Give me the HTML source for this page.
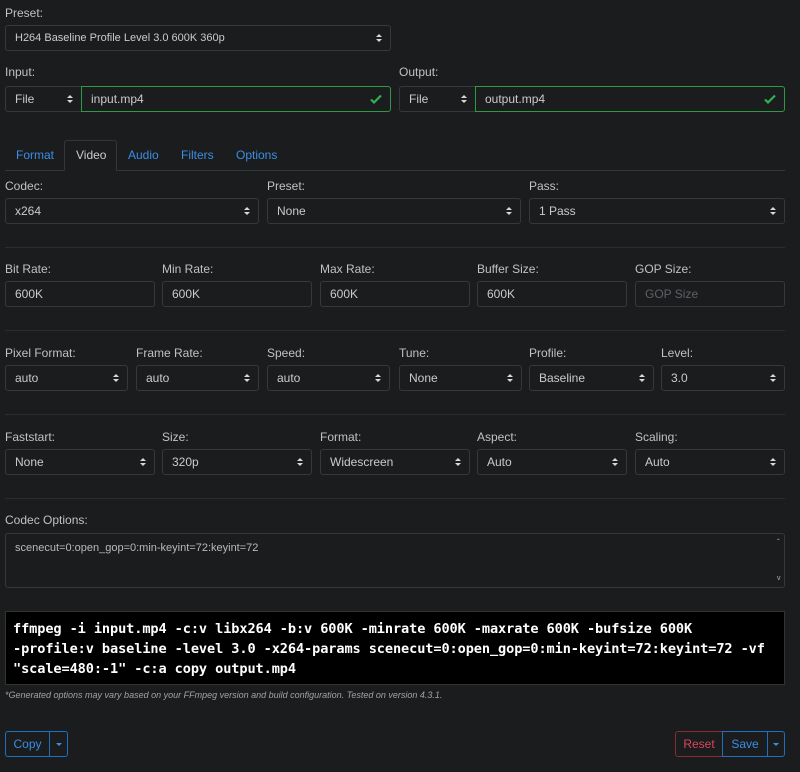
<!DOCTYPE html>
<html><head><meta charset="utf-8"><style>
*{box-sizing:border-box;margin:0;padding:0}
body{width:800px;height:772px;background:#1b1c1e;font-family:"Liberation Sans",sans-serif;font-size:12px;color:#c8c8c8;position:relative;overflow:hidden}
.a{position:absolute}
.l{position:absolute;font-size:12px;color:#bfc2c5}
.s,.i{position:absolute;height:26px;border:1px solid #36393c;border-radius:3px;background:#1b1c1e;padding:0 9px;line-height:24px;color:#c9cbcd;font-size:12px}
.s:after{content:"";position:absolute;right:8px;top:8px;width:0;height:0;border-left:3px solid transparent;border-right:3px solid transparent;border-bottom:3.5px solid #d8d8d8}
.s:before{content:"";position:absolute;right:8px;top:13px;width:0;height:0;border-left:3px solid transparent;border-right:3px solid transparent;border-top:3.5px solid #d8d8d8}
.g{border-color:#2e9a44}
.ck{position:absolute;right:7px;top:5px}
.hr{position:absolute;left:5px;width:780px;height:1px;background:#2b2d30}
.t{position:absolute;top:148px;color:#3a8ee6;font-size:12px}
.b{position:absolute;top:731px;height:26px;line-height:24px;border:1px solid #1f6fc0;color:#3a8ee6;text-align:center;font-size:12px}
.cv{width:0;height:0;border-left:3px solid transparent;border-right:3px solid transparent;border-top:3px solid #3a8ee6;display:inline-block;vertical-align:middle}
</style></head><body>
<div class="l" style="left:5px;top:6px">Preset:</div>
<div class="s" style="left:5px;top:25px;width:386px;font-size:11px">H264 Baseline Profile Level 3.0 600K 360p</div>

<div class="l" style="left:5px;top:65px">Input:</div>
<div class="s" style="left:5px;top:86px;width:77px;border-radius:3px 0 0 3px">File</div>
<div class="i g" style="left:81px;top:86px;width:310px;border-radius:0 3px 3px 0">input.mp4<svg class="ck" width="14" height="14" viewBox="0 0 14 14"><path d="M2 7.5l3 3 7-7" stroke="#2fb34f" stroke-width="2.2" fill="none"/></svg></div>
<div class="l" style="left:399px;top:65px">Output:</div>
<div class="s" style="left:399px;top:86px;width:77px;border-radius:3px 0 0 3px">File</div>
<div class="i g" style="left:475px;top:86px;width:310px;border-radius:0 3px 3px 0">output.mp4<svg class="ck" width="14" height="14" viewBox="0 0 14 14"><path d="M2 7.5l3 3 7-7" stroke="#2fb34f" stroke-width="2.2" fill="none"/></svg></div>

<div class="a" style="left:5px;top:170px;width:780px;height:1px;background:#34373a"></div>
<div class="a" style="left:64px;top:140px;width:53px;height:31px;border:1px solid #34373a;border-bottom:1px solid #1b1c1e;border-radius:3px 3px 0 0"></div>
<div class="t" style="left:16px">Format</div>
<div class="t" style="left:76px;color:#c9cbcd">Video</div>
<div class="t" style="left:128px">Audio</div>
<div class="t" style="left:181px">Filters</div>
<div class="t" style="left:236px">Options</div>

<div class="l" style="left:5px;top:179px">Codec:</div>
<div class="l" style="left:267px;top:179px">Preset:</div>
<div class="l" style="left:529px;top:179px">Pass:</div>
<div class="s" style="left:5px;top:198px;width:254px">x264</div>
<div class="s" style="left:267px;top:198px;width:254px">None</div>
<div class="s" style="left:529px;top:198px;width:256px">1 Pass</div>
<div class="hr" style="top:247px"></div>

<div class="l" style="left:5px;top:262px">Bit Rate:</div>
<div class="l" style="left:162px;top:262px">Min Rate:</div>
<div class="l" style="left:320px;top:262px">Max Rate:</div>
<div class="l" style="left:477px;top:262px">Buffer Size:</div>
<div class="l" style="left:635px;top:262px">GOP Size:</div>
<div class="i" style="left:5px;top:281px;width:150px">600K</div>
<div class="i" style="left:162px;top:281px;width:150px">600K</div>
<div class="i" style="left:320px;top:281px;width:150px">600K</div>
<div class="i" style="left:477px;top:281px;width:150px">600K</div>
<div class="i" style="left:635px;top:281px;width:150px;color:#5d6166">GOP Size</div>
<div class="hr" style="top:330px"></div>

<div class="l" style="left:5px;top:346px">Pixel Format:</div>
<div class="l" style="left:136px;top:346px">Frame Rate:</div>
<div class="l" style="left:267px;top:346px">Speed:</div>
<div class="l" style="left:399px;top:346px">Tune:</div>
<div class="l" style="left:529px;top:346px">Profile:</div>
<div class="l" style="left:661px;top:346px">Level:</div>
<div class="s" style="left:5px;top:365px;width:123px">auto</div>
<div class="s" style="left:136px;top:365px;width:123px">auto</div>
<div class="s" style="left:267px;top:365px;width:123px">auto</div>
<div class="s" style="left:399px;top:365px;width:123px">None</div>
<div class="s" style="left:529px;top:365px;width:125px">Baseline</div>
<div class="s" style="left:661px;top:365px;width:124px">3.0</div>
<div class="hr" style="top:414px"></div>

<div class="l" style="left:5px;top:430px">Faststart:</div>
<div class="l" style="left:162px;top:430px">Size:</div>
<div class="l" style="left:320px;top:430px">Format:</div>
<div class="l" style="left:477px;top:430px">Aspect:</div>
<div class="l" style="left:635px;top:430px">Scaling:</div>
<div class="s" style="left:5px;top:449px;width:150px">None</div>
<div class="s" style="left:162px;top:449px;width:150px">320p</div>
<div class="s" style="left:320px;top:449px;width:150px">Widescreen</div>
<div class="s" style="left:477px;top:449px;width:150px">Auto</div>
<div class="s" style="left:635px;top:449px;width:150px">Auto</div>
<div class="hr" style="top:498px"></div>

<div class="l" style="left:5px;top:513px">Codec Options:</div>
<div class="a" style="left:5px;top:533px;width:780px;height:55px;border:1px solid #36393c;border-radius:3px;padding:8px 9px;font-size:11px;color:#b8babc">scenecut=0:open_gop=0:min-keyint=72:keyint=72</div>
<div class="a" style="left:777px;top:538px;font-size:8px;color:#bbb">&#710;</div>
<div class="a" style="left:777px;top:575px;font-size:7px;color:#bbb">v</div>

<div class="a" style="left:5px;top:611px;width:780px;height:74px;background:#000;border:1px solid #333;padding:7px 7px;font-family:'DejaVu Sans Mono','Liberation Mono',monospace;font-weight:bold;font-size:13.6px;line-height:20px;color:#fff;letter-spacing:-0.1px;white-space:nowrap">ffmpeg -i input.mp4 -c:v libx264 -b:v 600K -minrate 600K -maxrate 600K -bufsize 600K<br>-profile:v baseline -level 3.0 -x264-params scenecut=0:open_gop=0:min-keyint=72:keyint=72 -vf<br>"scale=480:-1" -c:a copy output.mp4</div>
<div class="a" style="left:5px;top:690px;font-size:9px;font-style:italic;color:#a0a3a6">*Generated options may vary based on your FFmpeg version and build configuration. Tested on version 4.3.1.</div>

<div class="b" style="left:5px;width:45px;border-radius:3px 0 0 3px">Copy</div>
<div class="b" style="left:49px;width:19px;border-radius:0 3px 3px 0"><span class="cv"></span></div>
<div class="b" style="left:675px;width:48px;border-color:#8a2a35;color:#d9475a;border-radius:3px 0 0 3px">Reset</div>
<div class="b" style="left:722px;width:46px">Save</div>
<div class="b" style="left:767px;width:18px;border-radius:0 3px 3px 0"><span class="cv"></span></div>
</body></html>
